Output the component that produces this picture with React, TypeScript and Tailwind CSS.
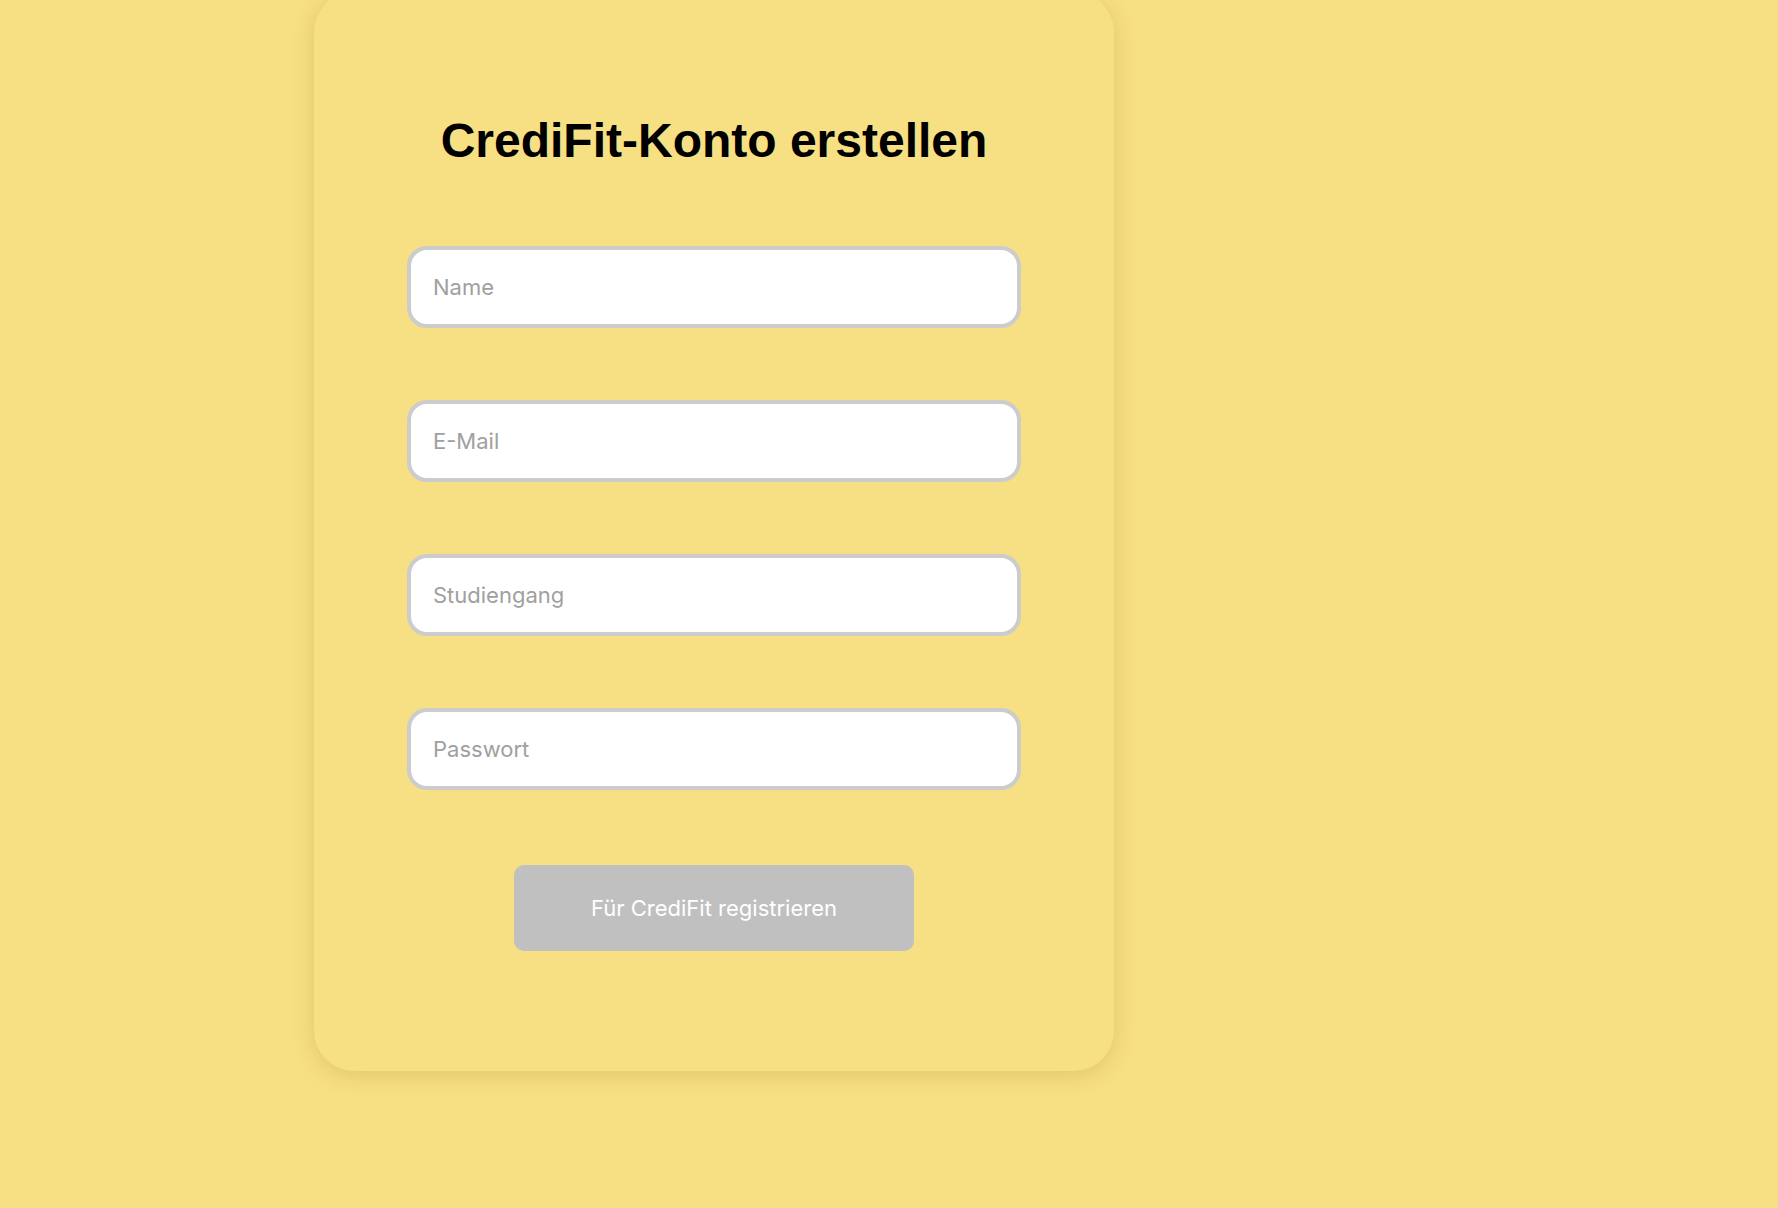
const fields = ["Name", "E-Mail", "Studiengang", "Passwort"];

const App = () => {
  return (
    <div className="min-h-screen overflow-hidden bg-[#f7df83] font-['Inter','Open_Sans',sans-serif]">
      <div className="ml-[314px] -mt-[8px] w-[800px] rounded-[40px] bg-[#f7df83] px-[93px] pb-[120px] pt-[125px] shadow-[0_4px_22px_rgba(120,90,0,0.18)]">
        {/* TITLE */}
        <h1 className="text-center font-['Liberation_Sans',Arial,sans-serif] text-5xl leading-none font-bold text-black">
          CrediFit-Konto erstellen
        </h1>

        {/* FORM */}
        <form className="mt-[81px] flex flex-col gap-[72px]" onSubmit={(e) => e.preventDefault()}>
          {fields.map((f) => (
            <input
              key={f}
              type={f === "Passwort" ? "password" : f === "E-Mail" ? "email" : "text"}
              placeholder={f}
              className="h-[82px] w-full rounded-[20px] border-[4px] border-[#cccccc] bg-white px-[22px] text-[22px] text-gray-800 outline-none placeholder:text-[#a0a0a0]"
            />
          ))}
        </form>

        <div className="mt-[75px] flex justify-center">
          <button
            type="button"
            className="h-[86px] w-[400px] rounded-[10px] bg-[#c0c0c0] text-[22px] text-white"
          >
            Für CrediFit registrieren
          </button>
        </div>
      </div>
    </div>
  );
};

export default App;
